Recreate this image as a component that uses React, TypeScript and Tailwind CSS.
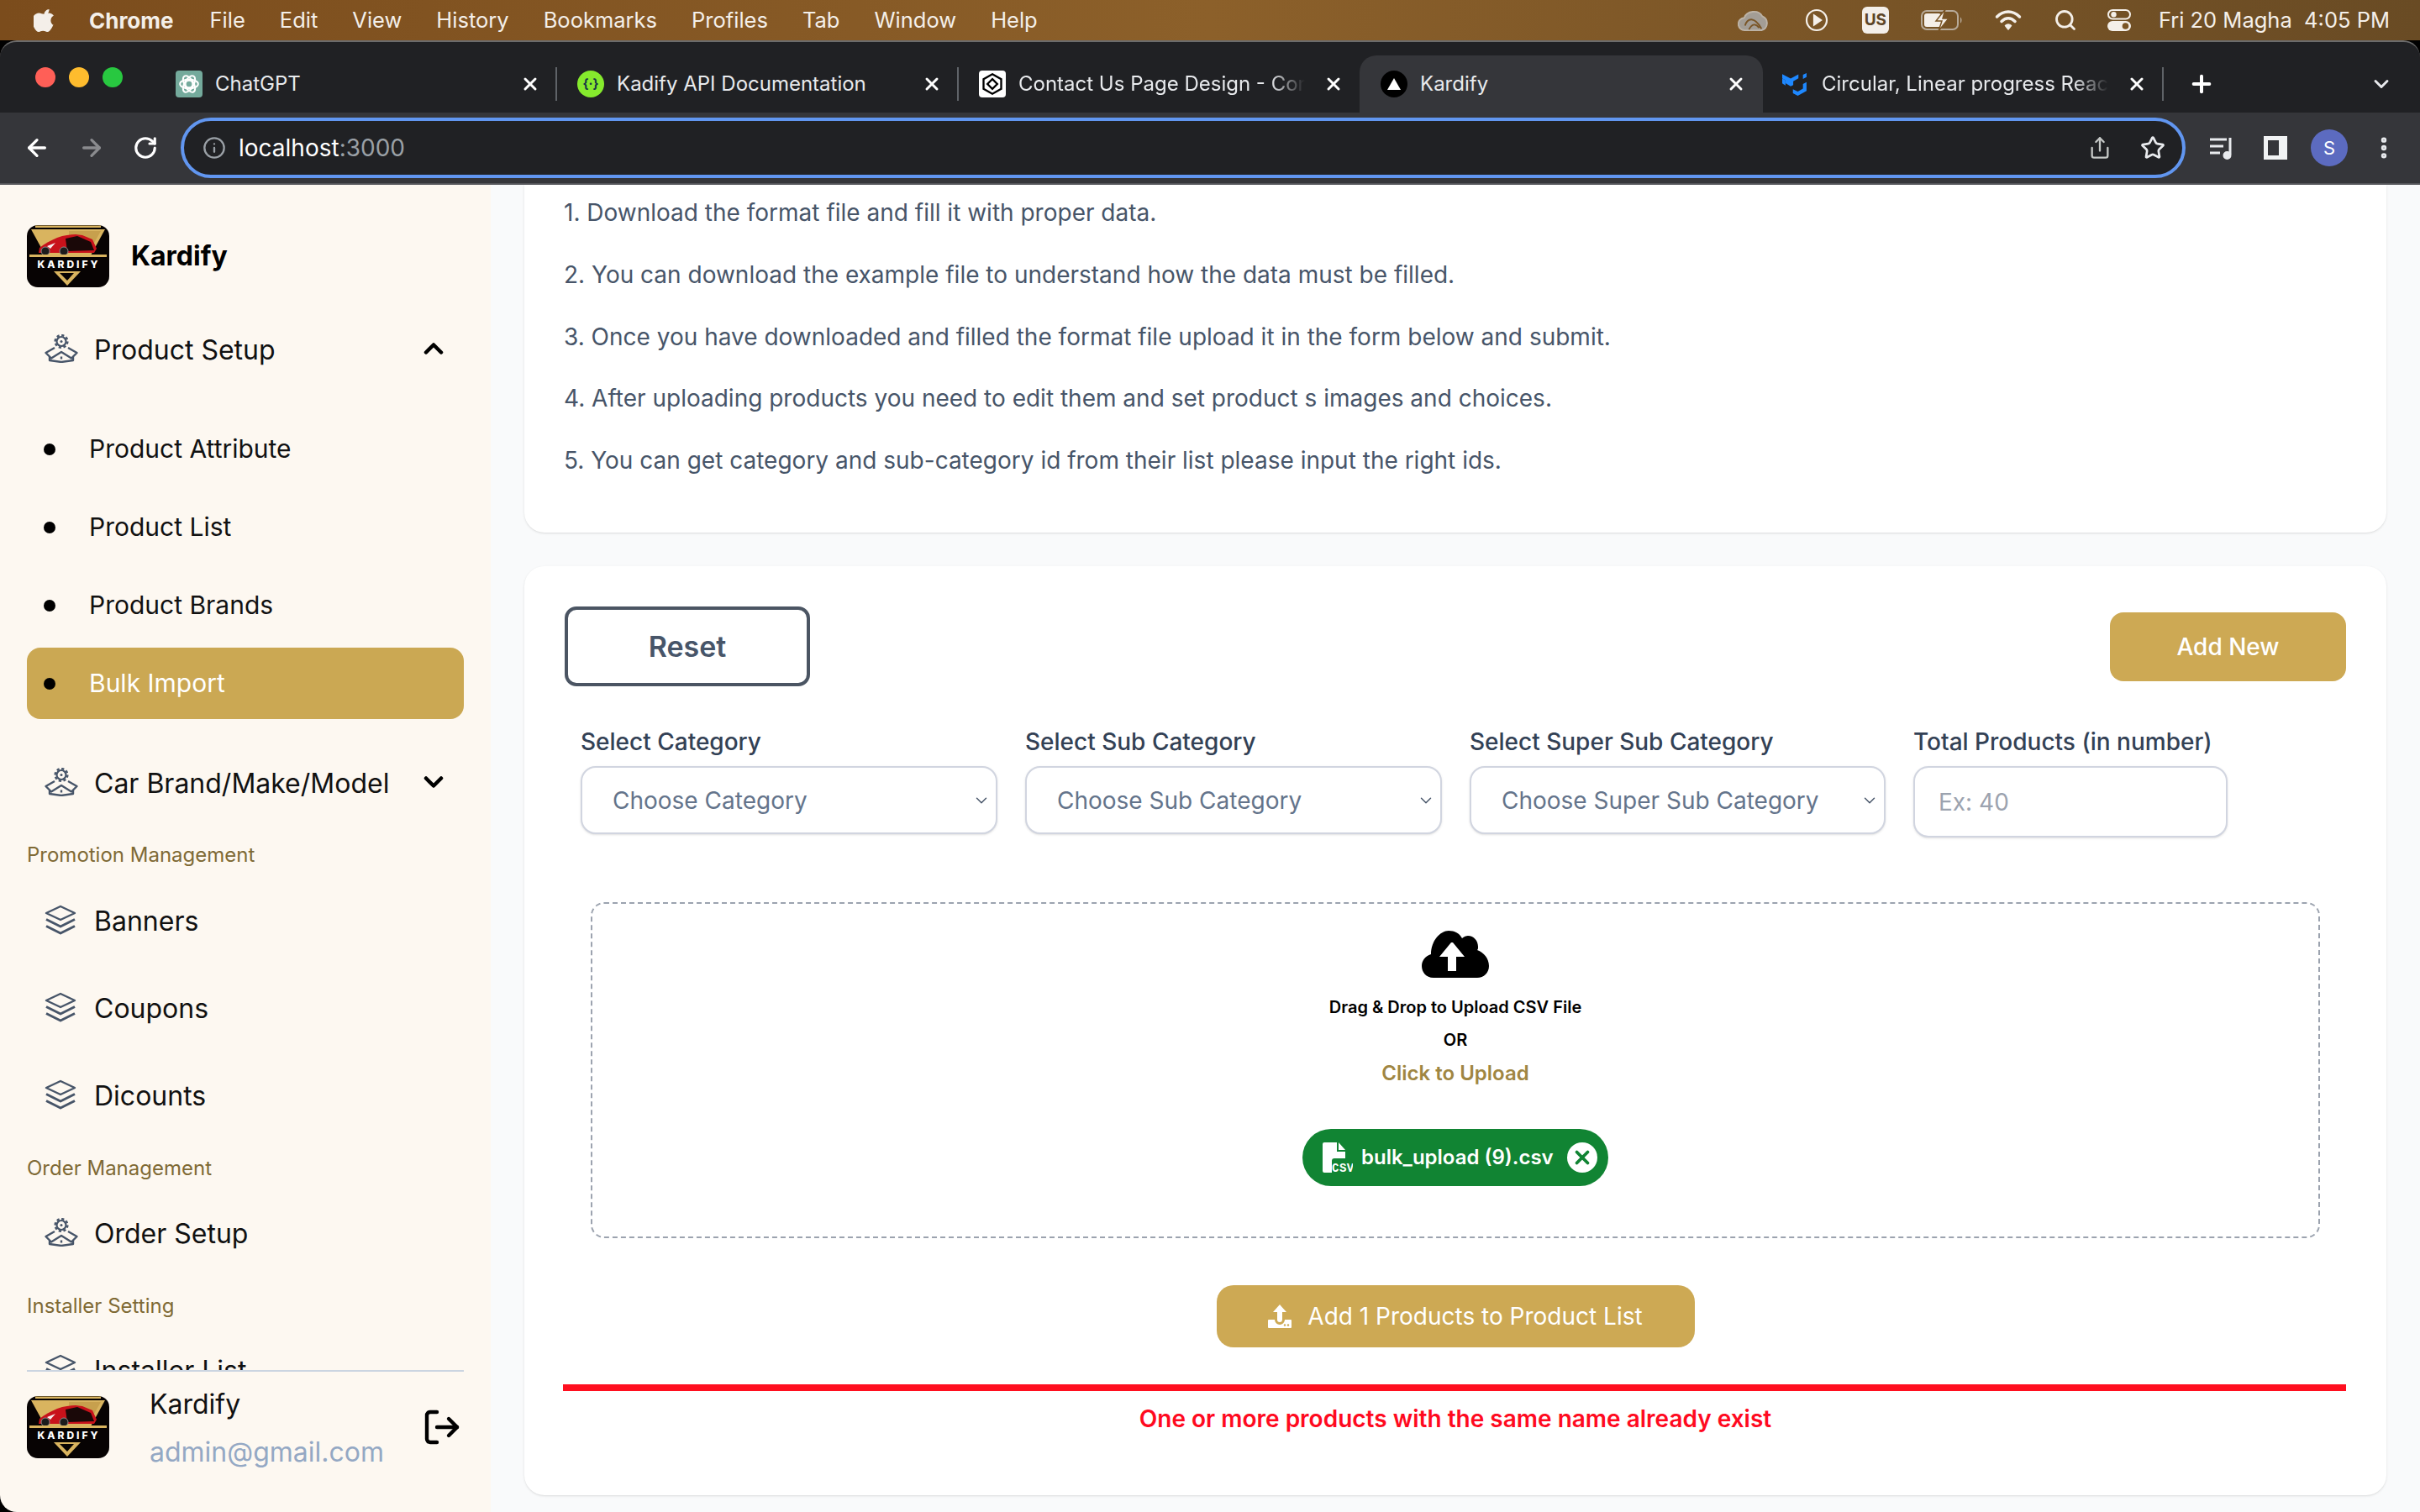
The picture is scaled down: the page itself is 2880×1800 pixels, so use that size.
import { ArrowLeft, ArrowRight, ChevronDown, ChevronUp, EllipsisVertical, Info, LogOut, Plus, RotateCw, Search, Share, Star, X } from 'lucide-react'

const font = { fontFamily: 'Inter, "Noto Sans", sans-serif' }

const menus = ['File', 'Edit', 'View', 'History', 'Bookmarks', 'Profiles', 'Tab', 'Window', 'Help']

const steps = [
  '1. Download the format file and fill it with proper data.',
  '2. You can download the example file to understand how the data must be filled.',
  '3. Once you have downloaded and filled the format file upload it in the form below and submit.',
  '4. After uploading products you need to edit them and set product s images and choices.',
  '5. You can get category and sub-category id from their list please input the right ids.',
]

function Logo() {
  return (
    <svg viewBox="0 0 98 74" className="w-[98px] h-[74px] shrink-0">
      <rect width="98" height="74" rx="13" fill="#070303" />
      <rect x="10" y="0.500" width="78" height="2.500" fill="#d9b45f" />
      <path d="M5 5h88L76 36H22z" fill="#d9b45f" />
      <path d="M50 7h38L74 32H50z" fill="#c7a04d" />
      <path d="M14 33l1-6c6-5 14-9 21-12 8-3 16-4 22-4l8 1 12 5 5 11-3 5z" fill="#c8121b" />
      <path d="M46 16l14-3 16 7 4 10-32 1z" fill="#1a0808" />
      <path d="M24 25l10-4-6 7z" fill="#f6eeee" />
      <circle cx="22" cy="31" r="5" fill="#1c1c1c" stroke="#8a8a8a" strokeWidth="1" />
      <circle cx="44" cy="31" r="5" fill="#1c1c1c" stroke="#8a8a8a" strokeWidth="1" />
      <rect x="3" y="35" width="92" height="3" fill="#d9b45f" />
      <text x="50" y="51" textAnchor="middle" fill="#fff" fontSize="12" fontWeight="800" letterSpacing="3" fontFamily="Inter, sans-serif">KARDIFY</text>
      <path d="M32 55h32L48 72z" fill="#d9b45f" />
      <path d="M39 57h17l-8 9z" fill="#070303" />
    </svg>
  )
}

function BoxIcon() {
  return (
    <svg viewBox="0 0 40 34" fill="none" stroke="#475569" strokeWidth="2.400" strokeLinejoin="round" className="w-[40px] h-[34px] shrink-0">
      <circle cx="20" cy="8.500" r="5.500" strokeWidth="2.200" />
      <circle cx="20" cy="8.500" r="7.400" strokeWidth="2.400" strokeDasharray="3.200 2.600" />
      <circle cx="20" cy="8.500" r="1.500" fill="#475569" stroke="none" />
      <path d="M12 16L1.500 22l6.500 6.500L20 21l12 7.500 6.500-6.500L28 16" />
      <path d="M6 27v4l14 2 14-2v-4" />
      <path d="M20 26.500v3" />
    </svg>
  )
}

function LayersIcon() {
  return (
    <svg viewBox="0 0 38 36" fill="none" stroke="#475569" strokeWidth="3" strokeLinejoin="round" className="w-[38px] h-[36px] shrink-0">
      <path d="M19 2L36 10 19 18 2 10z" strokeWidth="2.400" />
      <path d="M2 17.500L19 26l17-8.500" />
      <path d="M2 25.500L19 34l17-8.500" />
    </svg>
  )
}

function NavRow({ label, icon, chevron, className }: { label: string; icon: 'box' | 'layers'; chevron?: 'up' | 'down'; className?: string }) {
  return (
    <div className={`flex items-center h-[104px] pl-[21px] pr-[18px] shrink-0 ${className ?? ''}`}>
      {icon === 'box' ? <BoxIcon /> : <LayersIcon />}
      <span className={`text-[32px] text-[#111] whitespace-nowrap flex-1 pt-[3px] ${icon === 'box' ? 'ml-[19px]' : 'ml-[21px]'}`}>{label}</span>
      {chevron === 'up' && <ChevronUp size={36} strokeWidth={3} className="text-black" />}
      {chevron === 'down' && <ChevronDown size={36} strokeWidth={3} className="text-black" />}
    </div>
  )
}

function SubRow({ label, active }: { label: string; active?: boolean }) {
  return (
    <div className={`flex items-center shrink-0 pl-[20px] rounded-[16px] ${active ? 'h-[85px] mt-[4px] bg-[#cba853] text-white' : 'h-[93px] text-[#111]'}`}>
      <span className="w-[14px] h-[14px] rounded-full bg-black" />
      <span className="ml-[40px] text-[30px]">{label}</span>
    </div>
  )
}

function Heading({ label, className }: { label: string; className?: string }) {
  return <div className={`h-[40px] flex items-center text-[24px] text-[#7f6a35] shrink-0 ${className ?? ''}`}>{label}</div>
}

function Sidebar() {
  return (
    <aside className="w-[584px] shrink-0 bg-[#fdf8f1] flex flex-col h-full rounded-bl-[20px] overflow-hidden">
      <div className="px-[32px] pt-[48px] flex items-center shrink-0">
        <Logo />
        <span className="ml-[26px] text-[32px] font-bold text-black -mt-[1px]">Kardify</span>
      </div>
      <nav className="px-[32px] flex-1 min-h-0 overflow-hidden flex flex-col mt-[21px]">
        <NavRow label="Product Setup" icon="box" chevron="up" />
        <div className="h-[21px] shrink-0" />
        <SubRow label="Product Attribute" />
        <SubRow label="Product List" />
        <SubRow label="Product Brands" />
        <SubRow label="Bulk Import" active />
        <NavRow label="Car Brand/Make/Model" icon="box" chevron="down" className="mt-[23px]" />
        <Heading label="Promotion Management" className="mt-[15px]" />
        <NavRow label="Banners" icon="layers" className="mt-[5px]" />
        <NavRow label="Coupons" icon="layers" />
        <NavRow label="Dicounts" icon="layers" />
        <Heading label="Order Management" className="mt-[16px]" />
        <NavRow label="Order Setup" icon="box" className="mt-[4px]" />
        <Heading label="Installer Setting" className="mt-[16px]" />
        <NavRow label="Installer List" icon="layers" className="mt-[3px]" />
      </nav>
      <div className="mx-[32px] border-t-2 border-[#cbd5e1] pt-[29px] h-[169px] shrink-0 flex items-start">
        <Logo />
        <div className="ml-[48px] flex-1">
          <div className="text-[32px] text-[#111] leading-[40px] -mt-[10px]">Kardify</div>
          <div className="text-[32px] text-[#94a8c4] leading-[40px] mt-[17px]">admin@gmail.com</div>
        </div>
        <LogOut size={48} strokeWidth={2.200} className="text-black mt-[13px] mr-[2px]" />
      </div>
    </aside>
  )
}

function SelectBox({ label, placeholder, width }: { label: string; placeholder: string; width: string }) {
  return (
    <div className={`flex flex-col ${width}`}>
      <label className="h-[58px] text-[28px] font-medium text-[#334155] leading-[58px] whitespace-nowrap">{label}</label>
      <div className="h-[81px] rounded-[18px] border-2 border-[#d1d5e0] shadow-sm bg-white flex items-center pl-[36px] pr-[6px]">
        <span className="text-[28px] text-[#64748b] flex-1 whitespace-nowrap">{placeholder}</span>
        <ChevronDown size={22} strokeWidth={1.600} className="text-[#475569]" />
      </div>
    </div>
  )
}

function CloudIcon() {
  return (
    <svg viewBox="0 0 80 56" className="w-[80px] h-[56px]">
      <path d="M14 56C5 56 0 49 0 42c0-6 4-12 11-14C11 12 22 0 32 0c7 0 13 3 16 9 2-2 5-3 7-3 7 0 12 6 12 13 0 2 0 3-1 4 8 3 14 10 14 19 0 8-6 14-14 14z" fill="#000" />
      <path d="M35 14L21 31h10v17h10V31h10L37 14z" fill="#fff" />
    </svg>
  )
}

function CsvIcon() {
  return (
    <svg viewBox="0 0 36 36" className="w-[36px] h-[36px] shrink-0">
      <path d="M0 2a2 2 0 0 1 2-2h15v11h10v8H14a3 3 0 0 0-3 3v14H2a2 2 0 0 1-2-2z" fill="#fff" />
      <path d="M19 0l8 9h-8z" fill="#fff" />
      <text x="11" y="35" fill="#fff" fontSize="14" fontWeight="600" letterSpacing="0.500" fontFamily="'Liberation Mono', monospace">CSV</text>
    </svg>
  )
}

function UploadTray() {
  return (
    <svg viewBox="0 0 28 28" className="w-[28px] h-[28px] shrink-0">
      <path d="M14 0l8 9h-5v9a3 3 0 0 1-6 0V9H6z" fill="#fff" />
      <path d="M1 18h7a6 6 0 0 0 12 0h7a1 1 0 0 1 1 1v8a1 1 0 0 1-1 1H1a1 1 0 0 1-1-1v-8a1 1 0 0 1 1-1z" fill="#fff" />
      <circle cx="20" cy="24.500" r="1.200" fill="#cba853" />
      <circle cx="24" cy="24.500" r="1.200" fill="#cba853" />
    </svg>
  )
}

function Content() {
  return (
    <main className="flex-1 min-w-0 bg-[#f9fafb] px-[40px] overflow-hidden flex flex-col gap-[40px]">
      <section className="h-[414px] shrink-0 bg-white rounded-b-[24px] shadow-sm px-[47px] pt-[13px] text-[#475569]">
        <div className="flex flex-col gap-[33.800px]">
          {steps.map((s) => (
            <p key={s} className="text-[28px] leading-[40px]">{s}</p>
          ))}
        </div>
      </section>
      <section className="h-[1106px] shrink-0 bg-white rounded-[24px] shadow-sm px-[46px] pt-[48px]">
        <div className="flex justify-between items-center">
          <button className="ml-[2px] w-[292px] h-[95px] border-4 border-[#4b5563] rounded-[14px] text-[34px] font-semibold text-[#475569]">Reset</button>
          <button className="mr-[2px] w-[281px] h-[82px] rounded-[16px] bg-[#cda954] text-white text-[28px] font-medium">Add New</button>
        </div>
        <div className="flex gap-[33px] pl-[21px] mt-[37px]">
          <SelectBox label="Select Category" placeholder="Choose Category" width="w-[496px]" />
          <SelectBox label="Select Sub Category" placeholder="Choose Sub Category" width="w-[496px]" />
          <SelectBox label="Select Super Sub Category" placeholder="Choose Super Sub Category" width="w-[495px]" />
          <div className="flex flex-col w-[374px]">
            <label className="h-[58px] text-[28px] font-medium text-[#334155] leading-[58px] whitespace-nowrap">Total Products (in number)</label>
            <div className="h-[85px] rounded-[18px] border-2 border-[#d1d5e0] shadow-sm bg-white flex items-center pl-[28px] text-[28px] text-[#9ca3af]">Ex: 40</div>
          </div>
        </div>
        <div className="mx-[33px] mt-[77px] h-[400px] rounded-[16px] border-2 border-dashed border-[#9ca3af] flex flex-col items-center pt-[32px]">
          <CloudIcon />
          <p className="mt-[20px] h-[30px] leading-[30px] text-[20px] font-semibold text-black">Drag &amp; Drop to Upload CSV File</p>
          <p className="mt-[9px] h-[30px] leading-[30px] text-[20px] font-semibold text-black">OR</p>
          <p className="mt-[9px] h-[32px] leading-[32px] text-[24px] font-semibold text-[#a08642]">Click to Upload</p>
          <div className="mt-[50px] h-[68px] w-[364px] rounded-full bg-[#118433] flex items-center pl-[24px]">
            <CsvIcon />
            <span className="ml-[10px] text-[24px] font-semibold text-white whitespace-nowrap">bulk_upload (9).csv</span>
            <span className="ml-[16px] w-[36px] h-[36px] rounded-full bg-white flex items-center justify-center shrink-0">
              <X size={26} strokeWidth={3.500} className="text-[#118433]" />
            </span>
          </div>
        </div>
        <div className="flex justify-center mt-[56px]">
          <button className="w-[569px] h-[74px] rounded-[20px] bg-[#cda954] flex items-center justify-center text-white text-[28px]">
            <UploadTray />
            <span className="ml-[19px]">Add 1 Products to Product List</span>
          </button>
        </div>
        <div className="h-[8px] bg-[#ff0f1f] mt-[44px] mr-[2px]" />
        <p className="mt-[13px] text-center text-[28px] font-semibold text-[#ff0a1f] leading-[40px]">One or more products with the same name already exist</p>
      </section>
    </main>
  )
}

function TabIcon({ kind }: { kind: string }) {
  if (kind === 'gpt')
    return (
      <span className="w-[32px] h-[32px] rounded-[4px] bg-[#74aa9c] flex items-center justify-center shrink-0">
        <svg viewBox="0 0 24 24" fill="none" stroke="#fff" strokeWidth="1.800" className="w-[26px] h-[26px]">
          <circle cx="12" cy="12" r="4" />
          <ellipse cx="12" cy="12" rx="10" ry="5" />
          <ellipse cx="12" cy="12" rx="10" ry="5" transform="rotate(60 12 12)" />
          <ellipse cx="12" cy="12" rx="10" ry="5" transform="rotate(120 12 12)" />
        </svg>
      </span>
    )
  if (kind === 'swagger')
    return (
      <span className="w-[32px] h-[32px] rounded-full bg-[#85ea2d] flex items-center justify-center shrink-0 text-[15px] font-bold text-[#173647]" style={font}>{'{·}'}</span>
    )
  if (kind === 'contact')
    return (
      <span className="w-[32px] h-[32px] rounded-[4px] bg-white flex items-center justify-center shrink-0">
        <svg viewBox="0 0 24 24" fill="none" stroke="#000" strokeWidth="2" className="w-[28px] h-[28px]">
          <path d="M12 2l9 5v10l-9 5-9-5V7z" />
          <path d="M12 7l5 5-5 5-5-5z" />
        </svg>
      </span>
    )
  if (kind === 'next')
    return (
      <span className="w-[32px] h-[32px] rounded-full bg-black flex items-center justify-center shrink-0">
        <span className="w-0 h-0 border-x-[8px] border-x-transparent border-b-[14px] border-b-white" />
      </span>
    )
  return (
    <svg viewBox="0 0 83 70" className="w-[32px] h-[27px] shrink-0" fill="#1e88ff">
      <path d="M0 3l26 14 24-13v12L34 25v12L26 41 10 31v-9l-10-6z" />
      <path d="M0 16v16l10 6V22z" />
      <path d="M33 50v12l15 8 27-15V28l-11 6v14l-16 9z" />
      <path d="M64 5l11-5v12l-11 6z" />
    </svg>
  )
}

function Tab({ kind, title, active, sep = true, fade }: { kind: string; title: string; active?: boolean; sep?: boolean; fade?: boolean }) {
  return (
    <div className={`relative h-full shrink-0 flex items-center ${active ? 'w-[480px] -ml-[6px] mr-[4px] pl-[25px] pr-[20px] bg-[#35363a] rounded-t-[20px]' : 'w-[478px] pl-[19px] pr-[25px]'}`}>
      <TabIcon kind={kind} />
      <span className={`ml-[15px] flex-1 min-w-0 overflow-hidden whitespace-nowrap text-[24px] text-[#e8eaed] ${fade ? 'mr-[16px] [mask-image:linear-gradient(to_right,black_88%,transparent)]' : ''}`}>{title}</span>
      <X size={24} strokeWidth={3} className="text-white shrink-0 ml-[6px]" />
      {sep && <span className="absolute right-[5px] top-[14px] h-[40px] w-[2px] bg-[#5f6368]" />}
    </div>
  )
}

function Chrome() {
  return (
    <div className="shrink-0 rounded-t-[20px] overflow-hidden border-t-2 border-[#6b6b6b] bg-[#202124]">
      <div className="h-[84px] flex">
        <div className="w-[190px] shrink-0 flex items-center gap-[16px] pl-[42px] pb-[1px]">
          <span className="w-[24px] h-[24px] rounded-full bg-[#ff5f57]" />
          <span className="w-[24px] h-[24px] rounded-full bg-[#febc2e]" />
          <span className="w-[24px] h-[24px] rounded-full bg-[#28c840]" />
        </div>
        <div className="flex h-[68px] mt-[16px]">
          <Tab kind="gpt" title="ChatGPT" />
          <Tab kind="swagger" title="Kadify API Documentation" />
          <Tab kind="contact" title="Contact Us Page Design - Community" sep={false} fade />
          <Tab kind="next" title="Kardify" active sep={false} />
          <Tab kind="mui" title="Circular, Linear progress React components" fade />
        </div>
        <Plus size={32} strokeWidth={3} className="text-white ml-[24px] mt-[34px] shrink-0" />
        <ChevronDown size={28} strokeWidth={2.500} className="text-[#e8eaed] ml-[184px] mt-[36px] shrink-0" />
      </div>
      <div className="h-[86px] bg-[#35363a] flex items-center pl-[28px] border-b-2 border-[#55565a]">
        <ArrowLeft size={32} strokeWidth={2.500} className="text-white" />
        <ArrowRight size={32} strokeWidth={2.500} className="text-[#8a8b8e] ml-[33px]" />
        <RotateCw size={30} strokeWidth={2.500} className="text-white ml-[33px]" />
        <div className="ml-[27px] w-[2386px] h-[72px] rounded-full border-4 border-[#6196f0] bg-[#202124] flex items-center pl-[22px] pr-[20px]">
          <Info size={28} strokeWidth={2} className="text-[#9aa0a6]" />
          <span className="ml-[15px] text-[28px] text-white flex-1">localhost<span className="text-[#9aa0a6]">:3000</span></span>
          <Share size={28} strokeWidth={2} className="text-[#c4c7c5]" />
          <Star size={30} strokeWidth={2.200} className="text-[#e8eaed] ml-[34px]" />
        </div>
        <svg viewBox="0 0 32 32" fill="none" stroke="#e8eaed" strokeWidth="3" className="w-[32px] h-[32px] ml-[27px] shrink-0">
          <path d="M2 6h20M2 14h16M2 22h12M26 4v20" />
          <circle cx="22.500" cy="25" r="3.500" fill="#e8eaed" />
        </svg>
        <span className="w-[28px] h-[28px] shrink-0 border-[5px] border-r-[10px] border-[#f1f3f4] ml-[34px]" />
        <span className="w-[44px] h-[44px] shrink-0 rounded-full bg-[#5c6bc0] text-white text-[22px] flex items-center justify-center ml-[28px]">S</span>
        <EllipsisVertical size={32} strokeWidth={2.800} className="text-[#e8eaed] ml-[27px] shrink-0" />
      </div>
    </div>
  )
}

function MenuBar() {
  return (
    <div className="h-[48px] shrink-0 flex items-center bg-gradient-to-r from-[#7b4c1c] via-[#8c602a] to-[#694b24] text-[#f4efe9] text-[25.500px] pl-[40px] pr-[36px]">
      <svg viewBox="0 0 24 28" fill="#f4efe9" className="w-[24px] h-[30px]">
        <path d="M17 1c.2 2-.6 3.700-1.700 5-1.100 1.300-2.800 2.200-4.300 2-.3-1.800.6-3.700 1.600-4.800C13.800 1.900 15.600 1 17 1zM21.700 20c-.7 1.600-1 2.300-1.900 3.700-1.300 2-3 4.300-5.100 4.300-1.900 0-2.400-1.200-5-1.200s-3.200 1.200-5.100 1.200C2.500 28 1 25.900-.3 23.900-3.600 18.700-3.900 12.500-1.600 9.200 0 6.900 2.500 5.500 4.900 5.500s3.900 1.300 5.900 1.300c1.900 0 3-1.300 5.800-1.300 2.100 0 4.300 1.100 5.800 3.100-5.100 2.800-4.300 10 .3 11.400z" transform="translate(1.500)" />
      </svg>
      <span className="ml-[42px] font-bold text-[26px]">Chrome</span>
      <div className="flex gap-[41px] ml-[43px]">
        {menus.map((m) => (
          <span key={m}>{m}</span>
        ))}
      </div>
      <div className="ml-auto flex items-center">
        <svg viewBox="0 0 40 30" className="w-[38px] h-[28px]">
          <path d="M9 28a8 8 0 0 1-1-16C11 3 26 1 31 10a9.500 9.500 0 0 1-1 18z" fill="#a39d95" stroke="#bdb3a6" strokeWidth="2" />
          <path d="M9 22c3-10 12-12 21 4M14 27c4-8 9-8 13-2" fill="none" stroke="#7a5526" strokeWidth="2" />
        </svg>
        <svg viewBox="0 0 28 28" fill="none" stroke="#f4efe9" strokeWidth="2.200" className="w-[28px] h-[28px] ml-[42px]">
          <circle cx="14" cy="14" r="12" />
          <path d="M11 8.500L19 14l-8 5.500z" fill="#f4efe9" />
        </svg>
        <span className="w-[32px] h-[32px] rounded-[6px] bg-[#f4efe9] text-[#5d4526] text-[19px] font-bold flex items-center justify-center ml-[40px]">US</span>
        <svg viewBox="0 0 50 26" fill="none" className="w-[50px] h-[26px] ml-[38px]">
          <rect x="1" y="2" width="43" height="22" rx="6" stroke="#b7aa99" strokeWidth="2" />
          <path d="M47 9.500c2 1 2 6 0 7z" fill="#b7aa99" />
          <rect x="4" y="5" width="20" height="16" rx="3" fill="#f4efe9" />
          <path d="M29 0l-11 14h7l-4 12 12-15h-7l3-11z" fill="#f4efe9" stroke="#7a5526" strokeWidth="1.500" />
        </svg>
        <svg viewBox="0 0 32 24" fill="none" stroke="#f4efe9" strokeWidth="3.500" strokeLinecap="round" className="w-[32px] h-[24px] ml-[38px]">
          <path d="M2.500 8c8-8 19-8 27 0M8 13.500c5-5 11-5 16 0" />
          <path d="M12.500 18.500c2-2 5-2 7 0L16 23z" fill="#f4efe9" strokeWidth="1.500" strokeLinejoin="round" />
        </svg>
        <Search size={28} strokeWidth={2.400} className="text-[#f4efe9] ml-[38px]" />
        <svg viewBox="0 0 28 26" className="w-[28px] h-[26px] ml-[36px]">
          <rect x="1" y="1" width="26" height="10.500" rx="5.250" fill="none" stroke="#f4efe9" strokeWidth="2" />
          <circle cx="7.500" cy="6.250" r="3.200" fill="#f4efe9" />
          <rect x="0" y="14" width="28" height="12" rx="6" fill="#f4efe9" />
          <circle cx="21.500" cy="20" r="3.800" fill="#7a5526" />
        </svg>
        <span className="ml-[33px] whitespace-pre">Fri 20 Magha  4:05 PM</span>
      </div>
    </div>
  )
}

export default function App() {
  return (
    <div className="w-[2880px] h-[1800px] bg-black flex flex-col overflow-hidden" style={font}>
      <MenuBar />
      <Chrome />
      <div className="flex flex-1 min-h-0">
        <Sidebar />
        <Content />
      </div>
    </div>
  )
}
